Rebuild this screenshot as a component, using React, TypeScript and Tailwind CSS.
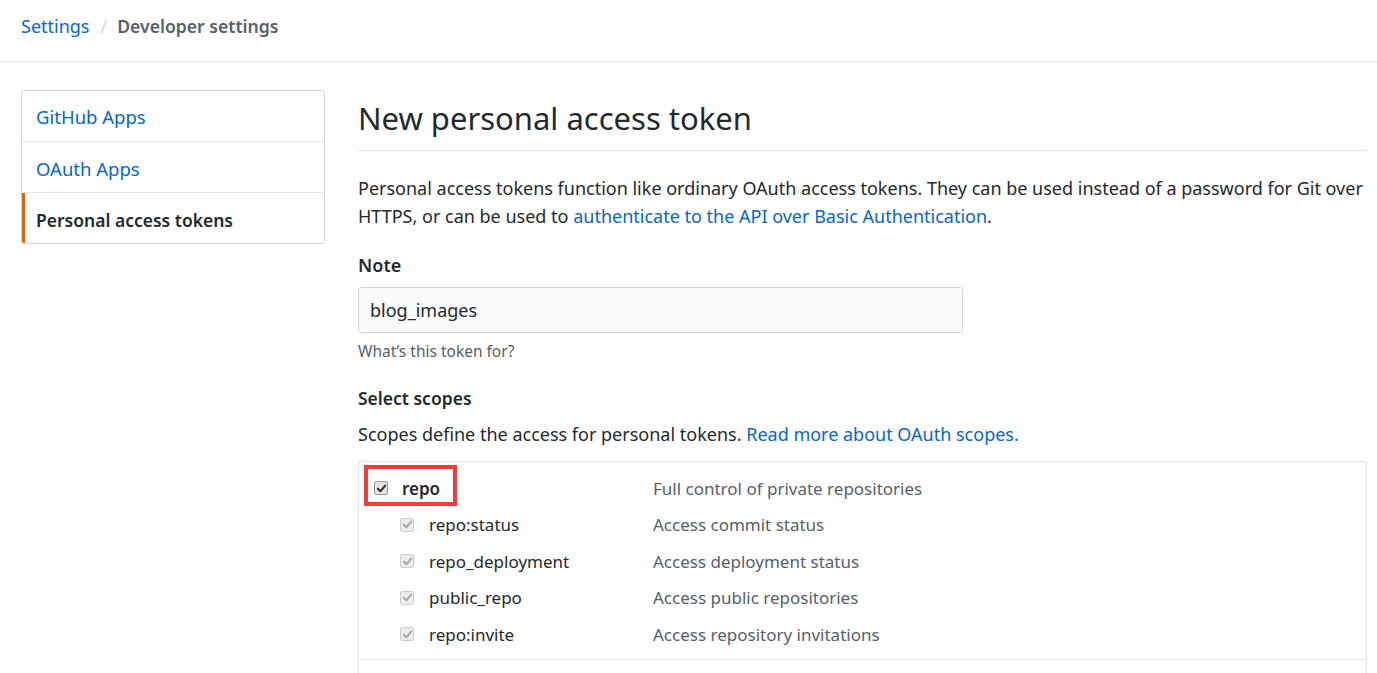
import React from "react";

function Check({ strong }: { strong?: boolean }) {
  return (
    <span
      className={
        strong
          ? "inline-flex h-[14px] w-[14px] items-center justify-center rounded-[2px] border border-[#9a9a9a] bg-[#e3e3e3]"
          : "inline-flex h-[14px] w-[14px] items-center justify-center rounded-[2px] border border-[#cfcfcf] bg-[#ececec]"
      }
    >
      <svg width="11" height="11" viewBox="0 0 12 12">
        <path
          d="M2 6.2 L4.8 9 L10 2.8"
          fill="none"
          stroke={strong ? "#333" : "#a8a8a8"}
          strokeWidth="2.2"
          strokeLinecap="round"
          strokeLinejoin="round"
        />
      </svg>
    </span>
  );
}

const subs = [
  ["repo:status", "Access commit status"],
  ["repo_deployment", "Access deployment status"],
  ["public_repo", "Access public repositories"],
  ["repo:invite", "Access repository invitations"],
];

export default function App() {
  return (
    <div
      className="h-[673px] overflow-hidden bg-white text-[#24292e]"
      style={{ fontFamily: '"Noto Sans", "Open Sans", sans-serif' }}
    >
      <div className="flex h-[62px] items-start border-b border-[#e1e4e8] pl-[21px] pt-[12px] text-[18px] leading-[28px]">
        <span className="text-[#0366d6]">Settings</span>
        <span className="ml-[11px] mr-[10px] text-[#d1d5da]">/</span>
        <span className="text-[17.6px] font-semibold text-[#586069]">Developer settings</span>
      </div>

      <div className="flex pl-[21px] pt-[28px]">
        <div className="w-[304px] shrink-0">
          <div className="overflow-hidden rounded-[3px] border border-[#d1d5da] text-[18.5px]">
            <div className="flex h-[51px] items-center border-b border-[#e1e4e8] pl-[14px] pt-[2px] text-[#0366d6]">
              GitHub Apps
            </div>
            <div className="flex h-[51px] items-center border-b border-[#e1e4e8] pl-[14px] pt-[3px] text-[#0366d6]">
              OAuth Apps
            </div>
            <div className="flex h-[50px] items-center border-l-[3px] border-[#e36209] pl-[11px] pt-[4px] text-[17.5px] font-semibold text-[#24292e]">
              Personal access tokens
            </div>
          </div>
        </div>

        <div className="ml-[33px] w-[1009px] shrink-0">
          <h1 className="border-b border-[#e1e4e8] pb-[12px] pt-[8px] text-[31px] font-normal leading-[40px]">
            New personal access token
          </h1>
          <p className="mt-[23px] text-[18px] leading-[28px]">
            <span className="whitespace-nowrap">
              Personal access tokens function like ordinary OAuth access tokens. They can be used instead of a password for Git over
            </span>
            <br />
            HTTPS, or can be used to{" "}
            <span className="text-[#0366d6]">authenticate to the API over Basic Authentication</span>.
          </p>

          <div className="mt-[21px] text-[18px] font-semibold leading-[28px]">Note</div>
          <div className="mt-[8px] flex h-[46px] w-[605px] items-center rounded-[3px] border border-[#d1d5da] bg-[#fafbfc] pl-[11px] text-[18px]">
            blog_images
          </div>
          <div className="mt-[7px] text-[15.5px] leading-[22px] text-[#586069]">What’s this token for?</div>

          <div className="mt-[22px] text-[17.5px] font-semibold leading-[28px]">Select scopes</div>
          <div className="mt-[8px] text-[18px] leading-[28px]">
            Scopes define the access for personal tokens.{" "}
            <span className="text-[#0366d6]">Read more about OAuth scopes.</span>
          </div>

          <div className="mt-[13px] h-[212px] rounded-t-[4px] border border-b-0 border-[#e1e4e8] text-[17px]">
            <div className="pb-[6px] pt-[8px]">
              <div className="relative grid h-[36.5px] grid-cols-[294px_1fr] items-center">
                <div className="flex items-center pl-[15px]">
                  <Check strong />
                  <span className="ml-[14px] font-semibold">repo</span>
                </div>
                <div className="text-[#586069]">Full control of private repositories</div>
                <div className="pointer-events-none absolute left-[5px] top-[-5px] h-[41px] w-[93px] border-[4px] border-[#f63a3a]" />
              </div>
              {subs.map(([n, d]) => (
                <div key={n} className="grid h-[36.5px] grid-cols-[294px_1fr] items-center">
                  <div className="flex items-center pl-[41px]">
                    <Check />
                    <span className="ml-[15px]">{n}</span>
                  </div>
                  <div className="text-[#586069]">{d}</div>
                </div>
              ))}
            </div>
            <div className="border-t border-[#e1e4e8]" />
          </div>
        </div>
      </div>
    </div>
  );
}
